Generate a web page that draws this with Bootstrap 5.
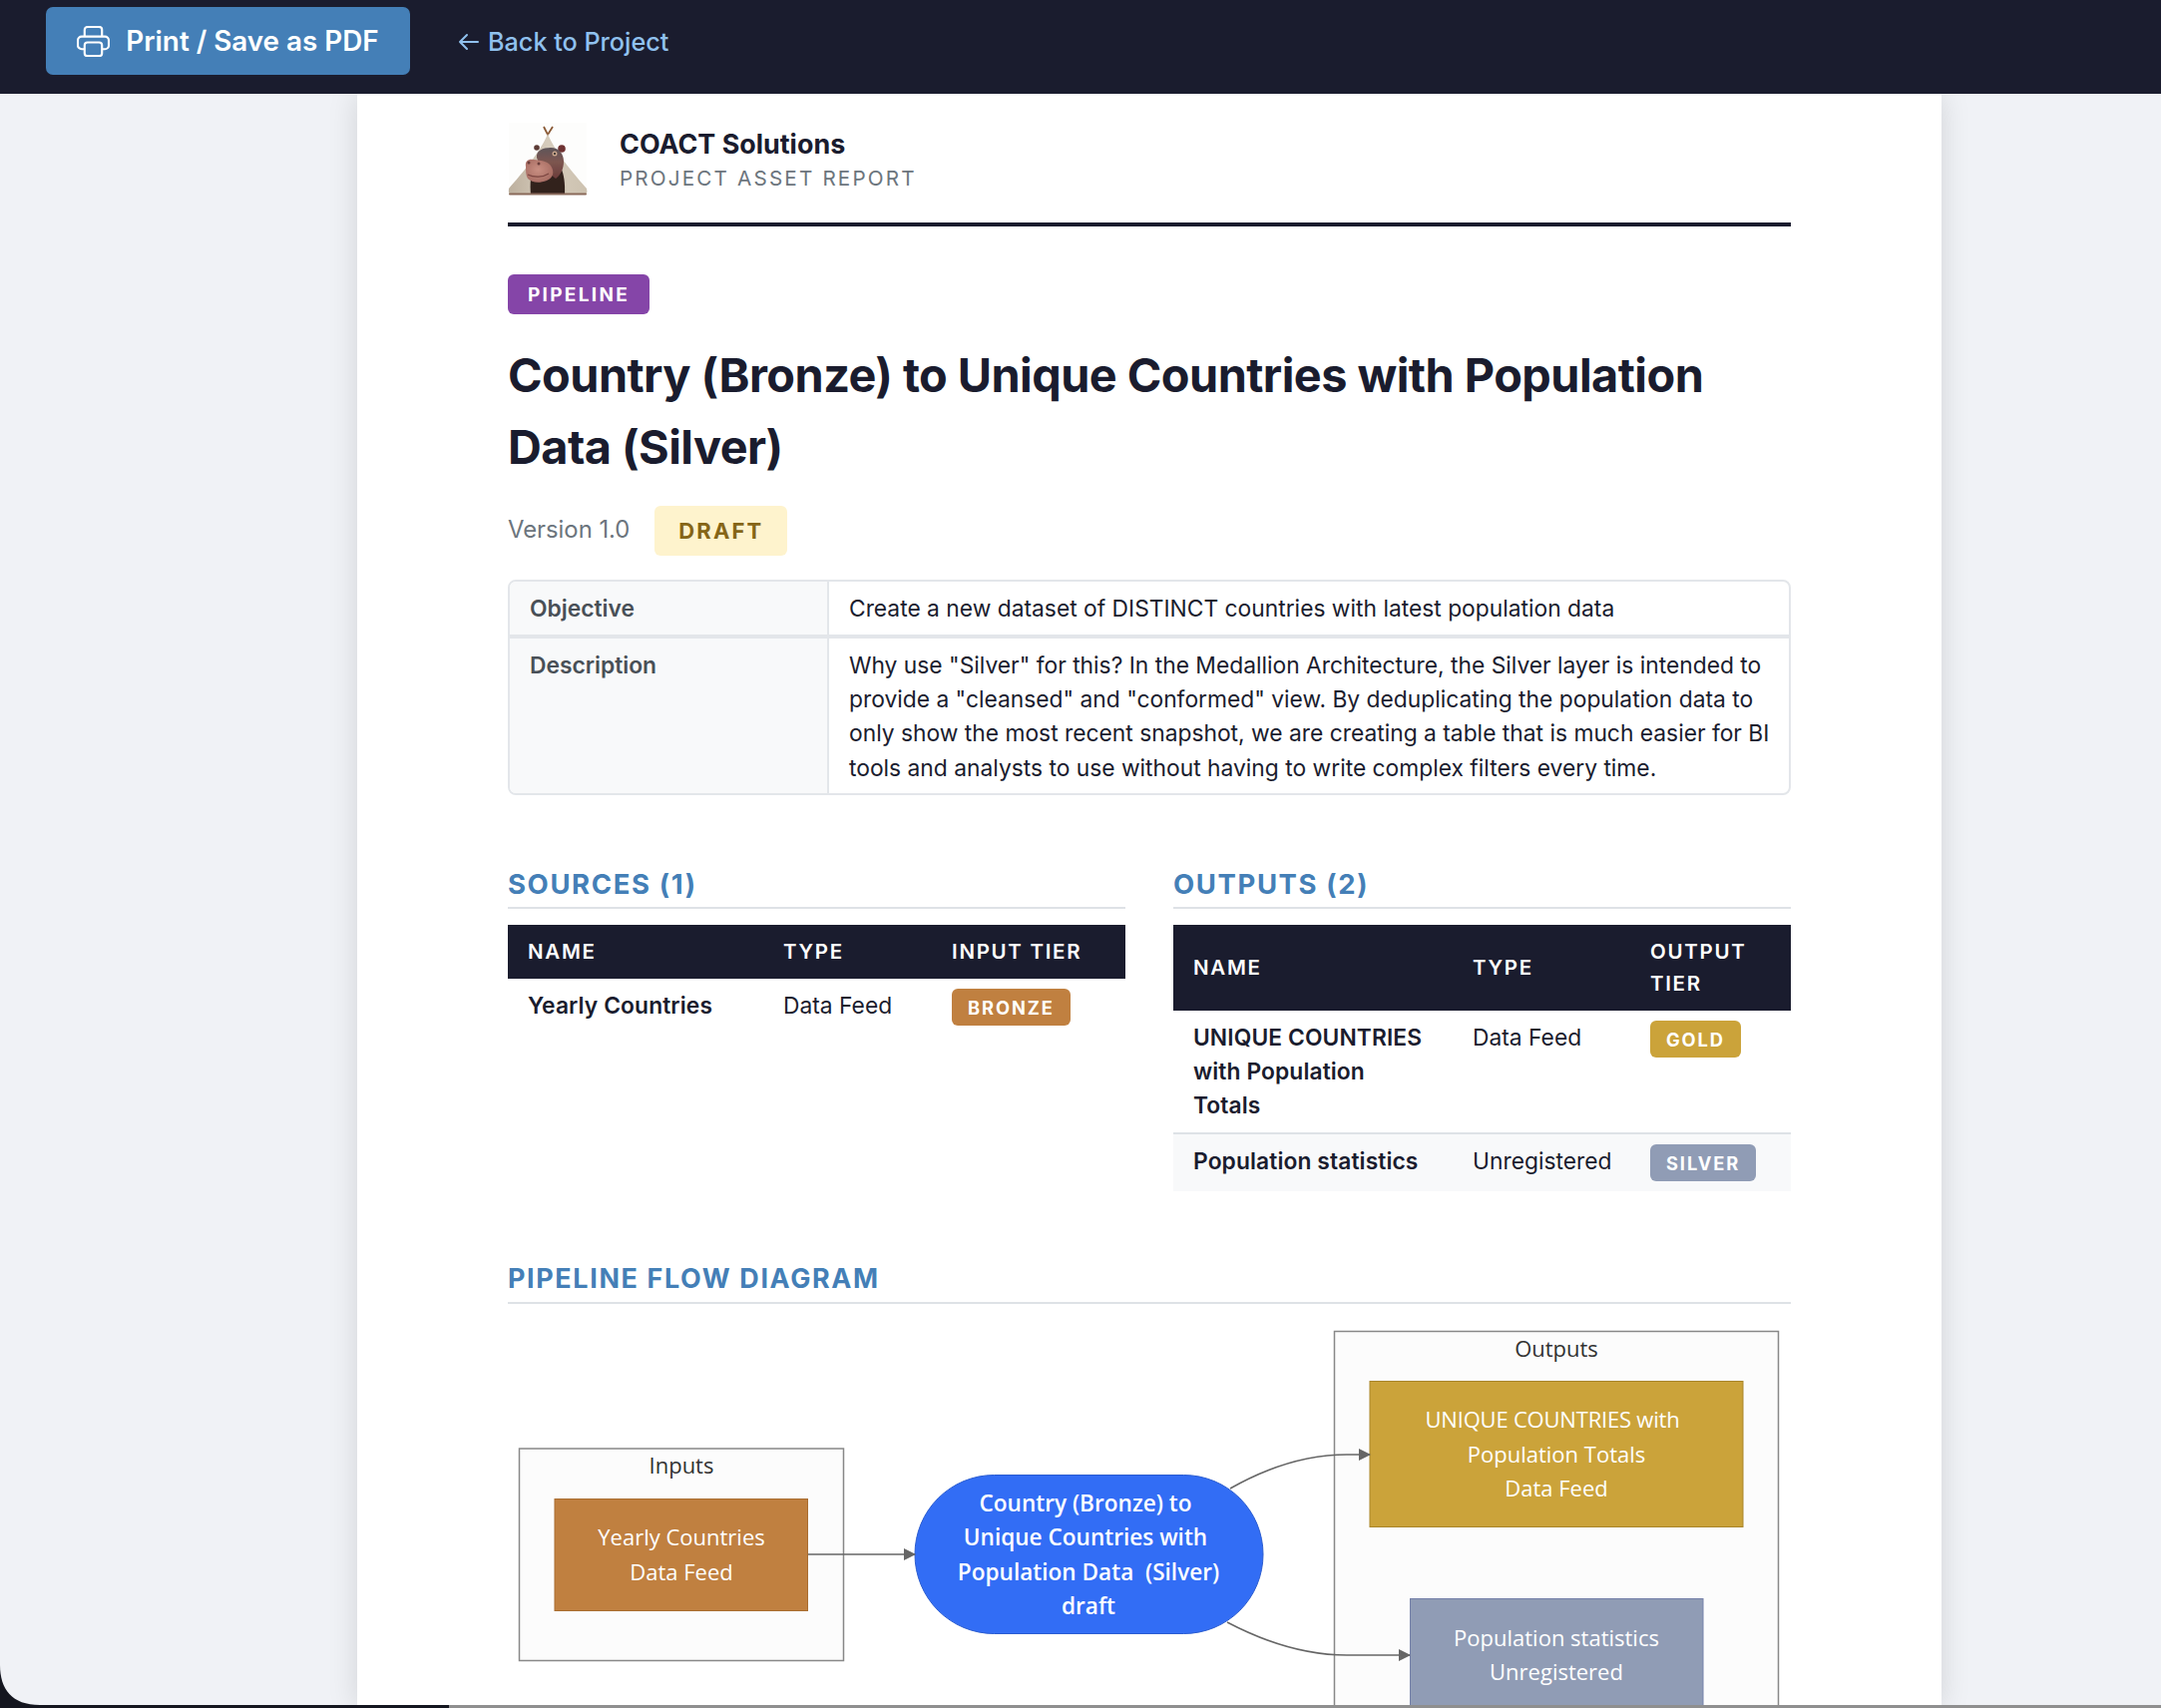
<!DOCTYPE html>
<html lang="en"><head><meta charset="utf-8"><title>Asset Report</title>
<link href="https://cdn.jsdelivr.net/npm/bootstrap@5.3.0/dist/css/bootstrap.min.css" rel="stylesheet">
<style>
html,body{height:1712px;overflow:hidden}
body{background:#f0f2f6;font-family:Inter,"Liberation Sans",sans-serif;font-size:22.8px;line-height:34.4px;color:#1a1c2e;position:relative}
.topbar{background:#1a1c2e;height:94px;padding:0 0 0 46px;gap:48px;align-items:center;justify-content:flex-start;flex-wrap:nowrap}
.printbtn{background:#447fb7;border:0;border-radius:7px;color:#fff;font-weight:600;font-size:27.8px;line-height:34px;width:365px;height:68px;margin-top:-12px;display:flex;align-items:center;justify-content:center;gap:16px;padding:0}
.backlnk{color:#90c1ee;text-decoration:none;font-size:25.2px;font-weight:500;margin-top:-9.6px;display:flex;align-items:center;gap:8px}
.paper{background:#fff;width:1588px;height:1618px;margin-left:358px;padding:28px 151px 0;box-shadow:0 0 28px rgba(0,0,0,.13);overflow:hidden}
.brandhead{height:105px;border-bottom:4px solid #1a1c2e;gap:31px;padding-bottom:0}
.brandtext{padding-top:4px}
.brandname{font-size:26.9px;font-weight:700;line-height:36px}
.brandsub{font-size:20.7px;letter-spacing:2.15px;color:#6c757d;line-height:34px}
.kindtag{background:#8545a8;color:#fff;font-size:19px;font-weight:700;letter-spacing:2.3px;border-radius:6px;padding:0 20px;height:40px;line-height:41px;margin-top:48px;display:inline-block;vertical-align:top}
.maintitle{font-size:46.85px;font-weight:700;line-height:72px;letter-spacing:-.55px;margin:24.5px 0 0;color:#1a1c2e}
.verline{margin-top:23px;height:50px;gap:25px;color:#6c757d;font-size:23.8px}
.drafttag{background:#fef3cd;color:#856517;font-size:22px;font-weight:700;letter-spacing:2.1px;border-radius:6px;height:50px;line-height:50px;padding:0 24px}
.infotbl{margin-top:24px;border:2px solid #e3e6ea;border-radius:8px;overflow:hidden;height:216.5px}
.infolabel{width:320px;flex:none;background:#f8f9fa;font-weight:600;color:#495057;padding:10px 20px;border-right:2px solid #e3e6ea}
.infovalue{padding:10px 14px 0 20px}
.inforow1{height:57px;border-bottom:4px solid #e3e6ea}
.inforow2{height:157px}
.sechead{font-size:27.5px;font-weight:700;letter-spacing:1.6px;color:#447fb7;line-height:36px;padding-bottom:5px;border-bottom:2px solid #dee2e6;margin:0 0 16px}
.secone{margin-top:71px}
.dtbl{margin:0;table-layout:fixed;font-size:22.8px;line-height:34px;--bs-table-bg:transparent;color:#1a1c2e}
.dtbl thead th{background:#1a1c2e;color:#fff;font-size:20.5px;font-weight:600;letter-spacing:1.7px;border:0;padding:11px 20px;vertical-align:middle;line-height:32px}
.dtbl td{padding:10px 20px;border:0;vertical-align:top;line-height:34px}
.dtbl .ename{font-weight:600;letter-spacing:.1px}
.dtbl tr.altrow td{background:#f8f9fa;border-top:2px solid #dee2e6;height:58px}
.s1{width:256px}.s2{width:169px}.s3{width:194px}
.o1{width:280px}.o2{width:178px}.o3{width:161px}
.tiertag{display:inline-block;color:#fff;font-size:18.3px;font-weight:700;letter-spacing:1.9px;height:37px;line-height:39px;border-radius:6px;padding:0 16px;vertical-align:top}
.t-bronze{background:#c08040}.t-gold{background:#cba33a}.t-silver{background:#909cb5}
.secflow{margin-top:69px;font-size:26.9px;letter-spacing:1.65px;line-height:36px;padding-bottom:6px}
.flowsvg{display:block;width:1286px;height:392px;overflow:hidden}
.flowtext{font-family:"Open Sans","Noto Sans",sans-serif;font-size:22px;fill:#fff;text-anchor:middle;white-space:pre}
.flowbold{font-weight:600;font-size:22.6px}
.flowtight{letter-spacing:-.2px}
.flowtitle{fill:#333}
.screenedge{position:absolute;left:0;bottom:0;width:2166px;height:3px;background:#8f8f8f}
.screendark{position:absolute;left:0;bottom:0;width:450px;height:3px;background:#14161f}
.screencorner{position:absolute;left:0;bottom:3px}
</style></head>
<body>
<nav class="navbar topbar">
<button type="button" class="btn printbtn">
<svg width="33" height="31" viewBox="0 0 34 32" fill="none" stroke="#fff" stroke-width="2.2" stroke-linejoin="round"><path d="M8 11V4a3 3 0 0 1 3-3h12a3 3 0 0 1 3 3v7"/><path d="M8 24H5a4 4 0 0 1-4-4v-5a4 4 0 0 1 4-4h24a4 4 0 0 1 4 4v5a4 4 0 0 1-4 4h-3"/><rect x="8" y="17" width="18" height="14" rx="3"/></svg>
<span>Print / Save as PDF</span></button>
<a href="#" class="backlnk"><svg width="22" height="20" viewBox="0 0 22 20" fill="none" stroke="#90c1ee" stroke-width="2" stroke-linecap="round" stroke-linejoin="round"><path d="M20 10H2M9 3l-7 7 7 7"/></svg><span>Back to Project</span></a>
</nav>
<main class="paper">
<header class="brandhead d-flex">
<svg width="81" height="74" viewBox="0 0 81 74" class="flex-none">
<defs><linearGradient id="tent" x1="0" y1="0" x2="1" y2="0"><stop offset="0" stop-color="#bdb09e"/><stop offset=".5" stop-color="#d6ccbc"/><stop offset="1" stop-color="#cdc2b0"/></linearGradient>
<radialGradient id="snout" cx=".45" cy=".45" r=".7"><stop offset="0" stop-color="#c98f82"/><stop offset="1" stop-color="#a0655c"/></radialGradient>
<linearGradient id="headg" x1="0" y1="0" x2="0" y2="1"><stop offset="0" stop-color="#5d5459"/><stop offset=".45" stop-color="#7d5650"/><stop offset="1" stop-color="#6b3c3a"/></linearGradient>
<filter id="soft"><feGaussianBlur stdDeviation=".45"/></filter></defs>
<rect x="1" y="1" width="78" height="72" fill="#fdfdfc"/>
<g filter="url(#soft)">
<path d="M36 5l4 8 5-8" fill="none" stroke="#8a5a36" stroke-width="1.8"/>
<path d="M40 12C47 30 66 52 79 67q1.500 6-3 6H4q-4 0-3-6C14 52 33 30 40 12z" fill="url(#tent)"/>
<path d="M23 73C21 52 26 40 40 36c12 2 18 14 17 37z" fill="#33201f"/>
<circle cx="54" cy="27" r="3.800" fill="#6e3030"/><circle cx="29" cy="26" r="2.800" fill="#5c3a36"/>
<path d="M29 36c-1-7 6-10 14-10 8 0 13 6 13 14 0 7-3 13-8 17L32 44z" fill="url(#headg)"/>
<circle cx="47" cy="32" r="2.500" fill="#c9a58c"/><circle cx="47" cy="32" r="1" fill="#222"/>
<path d="M18 45c-1-6 3-8 8-7 7 1 13 1 17 6 4 6 3 12-4 15-8 3-15 2-19-2-2-3-2-8-2-12z" fill="url(#snout)"/>
<circle cx="21" cy="41" r="1.500" fill="#6a3d3a"/><circle cx="31" cy="42" r="1.500" fill="#6a3d3a"/>
<path d="M20 53c6 3 15 3 21-1" fill="none" stroke="#7b4540" stroke-width="1.100"/>
<rect x="1" y="71.500" width="78" height="2" rx="1" fill="#8a6a5a"/>
</g></svg>
<div class="brandtext"><div class="brandname">COACT Solutions</div><div class="brandsub">PROJECT ASSET REPORT</div></div>
</header>
<span class="badge kindtag">PIPELINE</span>
<h1 class="maintitle">Country (Bronze) to Unique Countries with Population Data (Silver)</h1>
<div class="verline d-flex align-items-center"><span>Version 1.0</span><span class="badge drafttag">DRAFT</span></div>
<section class="infotbl">
<div class="d-flex inforow1"><div class="infolabel">Objective</div><div class="infovalue">Create a new dataset of DISTINCT countries with latest population data</div></div>
<div class="d-flex inforow2"><div class="infolabel">Description</div><div class="infovalue">Why use "Silver" for this? In the Medallion Architecture, the Silver layer is intended to provide a "cleansed" and "conformed" view. By deduplicating the population data to only show the most recent snapshot, we are creating a table that is much easier for BI tools and analysts to use without having to write complex filters every time.</div></div>
</section>
<div class="row gx-5 secone">
<div class="col-6">
<h2 class="sechead">SOURCES (1)</h2>
<table class="table dtbl"><colgroup><col class="s1"><col class="s2"><col class="s3"></colgroup>
<thead><tr><th>NAME</th><th>TYPE</th><th>INPUT TIER</th></tr></thead>
<tbody><tr><td class="ename">Yearly Countries</td><td>Data Feed</td><td><span class="badge tiertag t-bronze">BRONZE</span></td></tr></tbody></table>
</div>
<div class="col-6">
<h2 class="sechead">OUTPUTS (2)</h2>
<table class="table dtbl"><colgroup><col class="o1"><col class="o2"><col class="o3"></colgroup>
<thead><tr><th>NAME</th><th>TYPE</th><th>OUTPUT TIER</th></tr></thead>
<tbody><tr><td class="ename">UNIQUE COUNTRIES with Population Totals</td><td>Data Feed</td><td><span class="badge tiertag t-gold">GOLD</span></td></tr>
<tr class="altrow"><td class="ename">Population statistics</td><td>Unregistered</td><td><span class="badge tiertag t-silver">SILVER</span></td></tr></tbody></table>
</div>
</div>
<h2 class="sechead secflow">PIPELINE FLOW DIAGRAM</h2>
<svg class="flowsvg" viewBox="509 1324 1286 392">
<defs><marker id="arr" markerWidth="12" markerHeight="12" refX="11" refY="6" orient="auto" markerUnits="userSpaceOnUse"><path d="M0 0L12 6L0 12z" fill="#666"/></marker></defs>
<rect x="520.5" y="1453" width="325" height="212.5" fill="#fcfcfc" stroke="#888" stroke-width="1.5"/>
<rect x="1337.5" y="1335.5" width="445" height="420" fill="#fcfcfc" stroke="#888" stroke-width="1.5"/>
<text class="flowtext flowtitle" x="683" y="1478">Inputs</text>
<text class="flowtext flowtitle" x="1560" y="1361">Outputs</text>
<rect x="556" y="1503.5" width="253.5" height="112" fill="#c08040" stroke="#a96d30"/>
<text class="flowtext" x="683" y="1550">Yearly Countries</text><text class="flowtext" x="683" y="1585">Data Feed</text>
<rect x="917" y="1479.5" width="349" height="159" rx="79.5" fill="#326df5" stroke="#2a5cd0"/>
<text class="flowtext flowbold" x="1088" y="1516">Country (Bronze) to</text><text class="flowtext flowbold" x="1088" y="1550">Unique Countries with</text><text class="flowtext flowbold" x="1091" y="1585">Population Data  (Silver)</text><text class="flowtext flowbold" x="1091" y="1619">draft</text>
<rect x="1373" y="1385.5" width="374" height="146" fill="#cba33a" stroke="#a98528"/>
<text class="flowtext flowtight" x="1556" y="1432">UNIQUE COUNTRIES with</text><text class="flowtext" x="1560" y="1467">Population Totals</text><text class="flowtext" x="1560" y="1501">Data Feed</text>
<rect x="1413.5" y="1603.5" width="293.5" height="130" fill="#909cb5" stroke="#7480a8"/>
<text class="flowtext" x="1560" y="1651">Population statistics</text><text class="flowtext" x="1560" y="1685">Unregistered</text>
<path d="M810 1559H917" fill="none" stroke="#666" stroke-width="1.5" marker-end="url(#arr)"/>
<path d="M1233 1493C1270 1472 1310 1459 1350 1459H1373" fill="none" stroke="#666" stroke-width="1.5" marker-end="url(#arr)"/>
<path d="M1230 1627C1270 1648 1310 1660 1350 1660H1413" fill="none" stroke="#666" stroke-width="1.5" marker-end="url(#arr)"/>
</svg>
</main>
<svg class="screencorner" width="40" height="40" viewBox="0 0 40 40"><path d="M0 0C0 24 12 40 40 40H0z" fill="#14161f"/></svg>
<div class="screenedge"></div><div class="screendark"></div>
</body></html>
